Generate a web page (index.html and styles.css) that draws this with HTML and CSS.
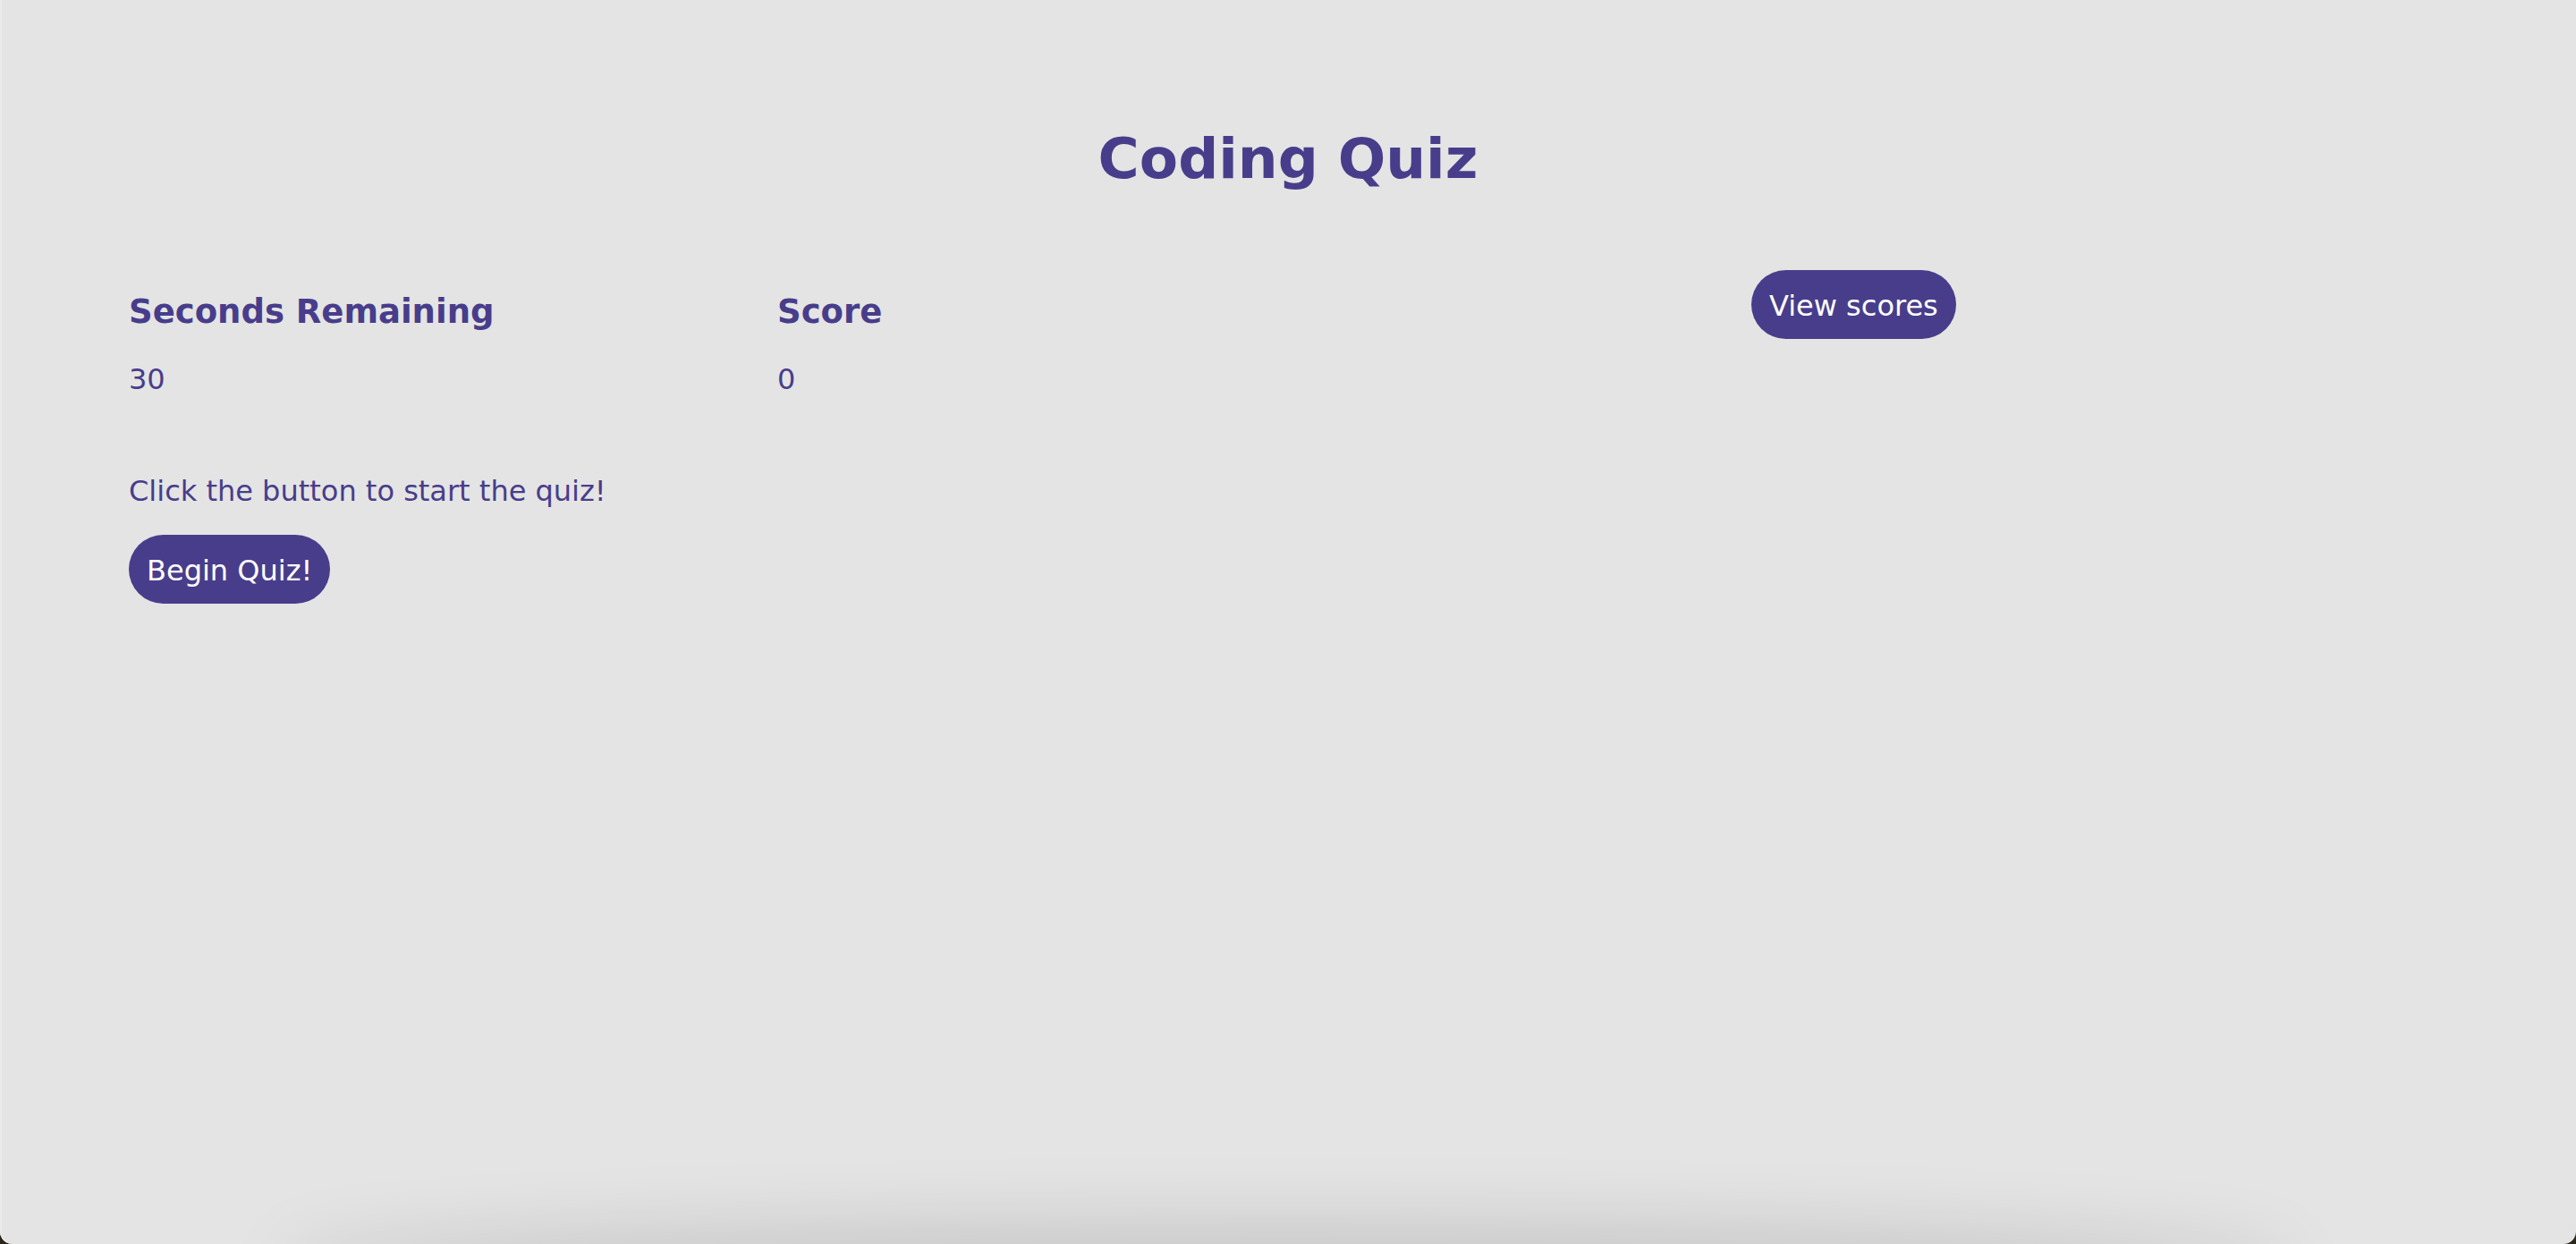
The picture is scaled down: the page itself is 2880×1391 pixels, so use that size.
FILE: index.html
```html
<!DOCTYPE html>
<html lang="en">
<head>
<meta charset="utf-8">
<title>Coding Quiz</title>
<link rel="stylesheet" href="styles.css">
</head>
<body>
<div class="window">
  <header class="page-header">
    <h1 class="title">Coding Quiz</h1>
  </header>
  <section class="stats">
    <div class="stat">
      <h3 class="stat-label">Seconds Remaining</h3>
      <p class="stat-value">30</p>
    </div>
    <div class="stat">
      <h3 class="stat-label">Score</h3>
      <p class="stat-value">0</p>
    </div>
    <div class="actions">
      <button class="pill-btn" type="button">View scores</button>
    </div>
  </section>
  <section class="intro">
    <p class="intro-text">Click the button to start the quiz!</p>
    <button class="pill-btn begin-btn" type="button">Begin Quiz!</button>
  </section>
</div>
</body>
</html>
```
FILE: styles.css
```css
html {
  background: #2b2618;
  height: 100%;
}

body {
  margin: 0;
  height: 100%;
}

.window {
  box-sizing: border-box;
  height: 100vh;
  background: #e4e4e4;
  border-radius: 0 0 14px 14px;
  padding-top: 141px;
  font-family: "DejaVu Sans", "Liberation Sans", sans-serif;
  font-size: 32px;
  color: #483d8b;
  overflow: hidden;
  position: relative;
  box-shadow: inset 2px 0 0 #ebebeb;
}

.window::after {
  content: "";
  position: absolute;
  left: 330px;
  right: 330px;
  bottom: -50px;
  height: 50px;
  border-radius: 50%;
  box-shadow: 0 0 80px 24px rgba(0, 0, 0, 0.13);
}

.title {
  margin: 0;
  font-size: 63px;
  line-height: 74px;
  font-weight: bold;
  text-align: center;
}

.stats {
  display: grid;
  grid-template-columns: 725px 1089px auto;
  align-items: start;
  margin-top: 87px;
  padding-left: 144px;
}

.stat-label {
  margin: 25px 0 0;
  font-size: 37px;
  line-height: 43px;
  font-weight: bold;
}

.stat-value {
  margin: 36px 0 0;
  line-height: 37px;
}

.actions {
  display: flex;
}

.intro {
  margin-top: 88px;
  padding-left: 144px;
}

.intro-text {
  margin: 0;
  line-height: 37px;
}

.pill-btn {
  display: block;
  font-family: inherit;
  font-size: 32px;
  line-height: 37px;
  padding: 22px 20px 18px;
  border: 0;
  border-radius: 40px;
  background: #483d8b;
  color: #ffffff;
}

.begin-btn {
  margin-top: 30px;
}
```
